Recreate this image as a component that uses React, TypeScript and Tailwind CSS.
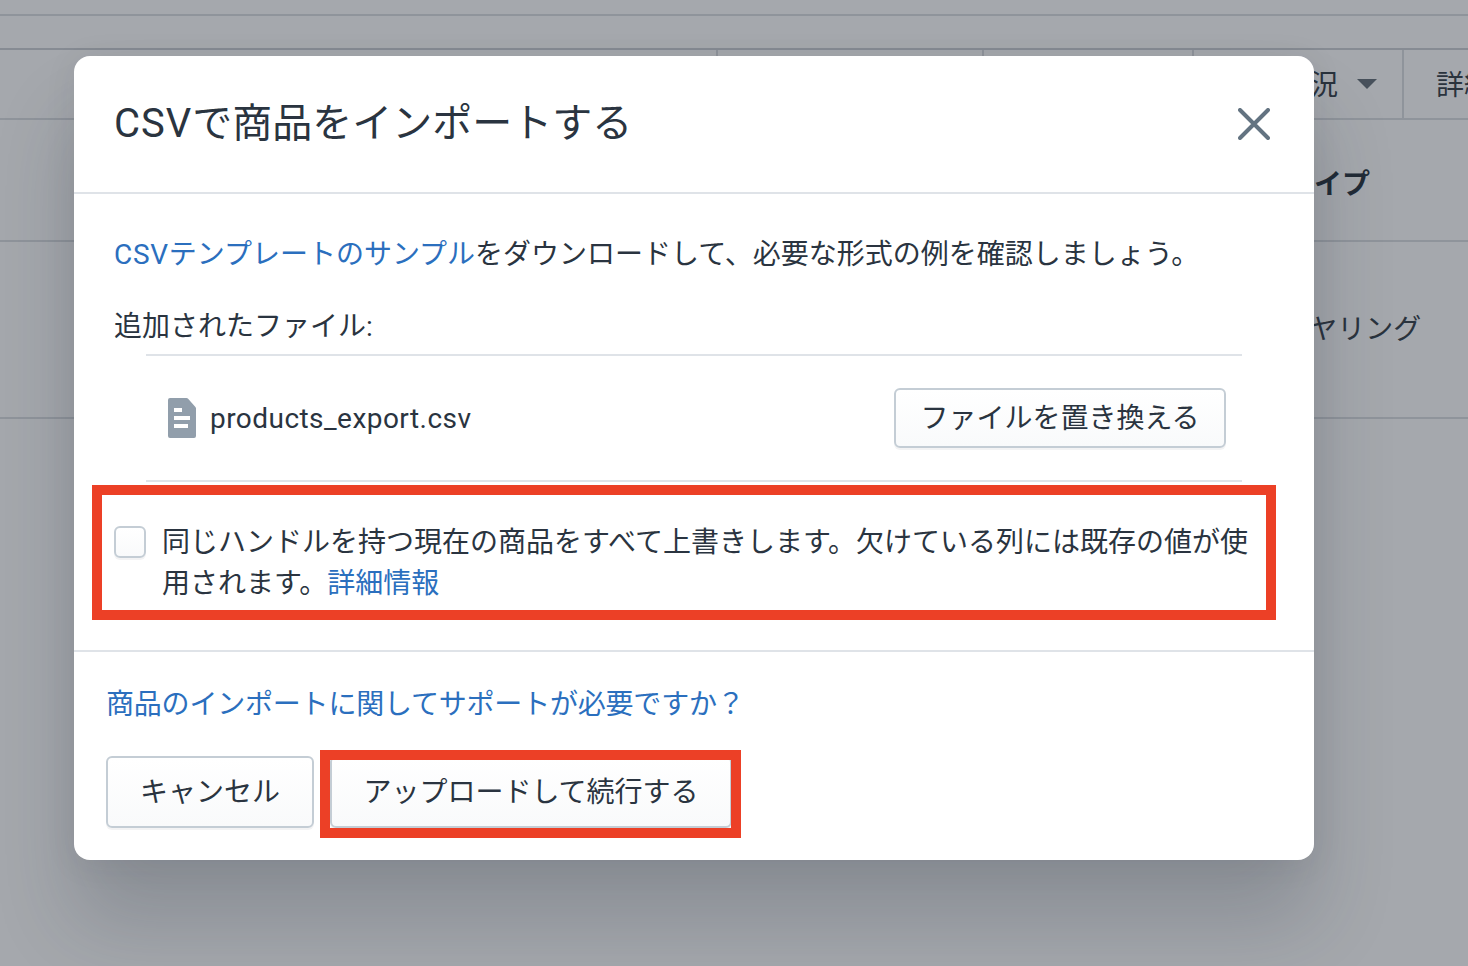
const font = { fontFamily: '"Roboto", "Noto Sans CJK JP", sans-serif' };

function FileIcon() {
  return (
    <svg className="w-[28px] h-[40px] shrink-0" viewBox="0 0 28 40">
      <path
        d="M2 0h16.5a2 2 0 0 1 1.4.6l7.500 8.500a2 2 0 0 1 .6 1.400V38a2 2 0 0 1-2 2H2a2 2 0 0 1-2-2V2a2 2 0 0 1 2-2z"
        fill="#919eab"
      />
      <rect x="6" y="10" width="8" height="4" fill="#fff" />
      <rect x="6" y="18" width="16" height="4" fill="#fff" />
      <rect x="6" y="26" width="14" height="4" fill="#fff" />
    </svg>
  );
}

function Button({ children, className }: { children: React.ReactNode; className: string }) {
  return (
    <button
      className={
        "flex items-center justify-center rounded-[6px] border-2 border-[#c4cdd5] bg-gradient-to-b from-white to-[#f9fafb] pt-[2px] text-[28px] text-[#2a3440] shadow-[0_2px_0_rgba(22,29,37,0.05)] " +
        className
      }
    >
      {children}
    </button>
  );
}

export default function App() {
  return (
    <div
      className="relative h-[966px] w-full overflow-hidden bg-[#a5a8ad] text-[28px] leading-[40px] text-[#2a3440]"
      style={font}
    >
      {/* page behind the dialog */}
      <div className="h-[16px] border-b-2 border-[#8f949b]" />
      <div className="h-[34px] border-b-2 border-[#868b93]" />
      <div className="flex h-[70px] border-b-2 border-[#8f949b]">
        <div className="w-[718px] shrink-0 border-r-2 border-[#8f949b]" />
        <div className="w-[266px] shrink-0 border-r-2 border-[#8f949b]" />
        <div className="w-[210px] shrink-0 border-r-2 border-[#8f949b]" />
        <div className="flex w-[210px] shrink-0 items-center gap-[19px] border-r-2 border-[#8f949b] pl-[32px] text-[#2a333d]">
          <span className="pt-[3px]">在庫状況</span>
          <svg className="h-[10px] w-[20px]" viewBox="0 0 20 10">
            <path d="M0 0h20L10 10z" fill="#47505b" />
          </svg>
        </div>
        <div className="whitespace-nowrap pl-[32px] leading-[71px] text-[#2a333d]">詳細</div>
      </div>
      <div className="flex h-[122px] items-center border-b-2 border-[#8f949b] pt-[10px] pl-[1286px] font-bold text-[#212b36]">
        タイプ
      </div>
      <div className="flex h-[177px] items-center border-b-2 border-[#8f949b] pb-[0px] pl-[1282px] text-[#2a333d]">
        イヤリング
      </div>

      {/* dialog */}
      <div className="absolute inset-0 pl-[74px] pt-[56px]">
        <div className="h-[804px] w-[1240px] rounded-[16px] bg-white shadow-[0_62px_82px_0_rgba(32,42,53,0.2),0_4px_32px_0_rgba(32,42,54,0.08)]">
          <div className="flex h-[138px] items-center justify-between border-b-2 border-[#dfe3e8] pl-[40px] pr-[44px]">
            <h2 className="text-[40px] font-normal leading-[48px]">
              <span className="tracking-[1px]">CSV</span>で商品をインポートする
            </h2>
            <svg className="h-[32px] w-[32px]" viewBox="0 0 32 32">
              <path d="M2 2l28 28M30 2L2 30" stroke="#637381" strokeWidth="4" strokeLinecap="round" />
            </svg>
          </div>

          <div className="flex flex-col pt-[41px]">
            <p className="px-[40px]">
              <a className="text-[#2b6fbe]">
                <span className="tracking-[0.7px]">CSV</span>テンプレートのサンプル
              </a>
              をダウンロードして、必要な形式の例を確認しましょう。
            </p>
            <p className="mt-[32px] px-[40px]">追加されたファイル:</p>
            <div className="mx-[72px] mt-[7px] flex h-[128px] items-center justify-between border-y-2 border-[#dfe3e8] pl-[22px] pr-[16px]">
              <div className="flex items-center gap-[14px]">
                <FileIcon />
                <span className="pt-[2px] tracking-[0.45px]">products_export.csv</span>
              </div>
              <Button className="h-[60px] w-[332px]">ファイルを置き換える</Button>
            </div>
            <div className="ml-[18px] mr-[38px] mt-[3px] flex h-[135px] gap-[16px] border-[10px] border-[#ec4026] pl-[12px] pt-[27px]">
              <span className="mt-[4px] h-[32px] w-[32px] shrink-0 rounded-[6px] border-2 border-[#c4cdd5] bg-gradient-to-b from-white to-[#f9fafb] shadow-[0_2px_0_rgba(22,29,37,0.05)]" />
              <p className="leading-[41px]">
                同じハンドルを持つ現在の商品をすべて上書きします。欠けている列には既存の値が使用されます。
                <a className="text-[#2b6fbe]">詳細情報</a>
              </p>
            </div>
          </div>

          <div className="mt-[30px] border-t-2 border-[#dfe3e8] px-[32px] pt-[33px]">
            <a className="block tracking-[-0.2px] text-[#2b6fbe]">商品のインポートに関してサポートが必要ですか？</a>
            <div className="mt-[31px] flex gap-[16px]">
              <Button className="h-[72px] w-[208px]">キャンセル</Button>
              <div className="relative">
                <Button className="h-[72px] w-[402px]">アップロードして続行する</Button>
                <div className="absolute -bottom-[10px] -left-[10px] -right-[9px] -top-[6px] border-[10px] border-[#ec4026]" />
              </div>
            </div>
          </div>
        </div>
      </div>
    </div>
  );
}
